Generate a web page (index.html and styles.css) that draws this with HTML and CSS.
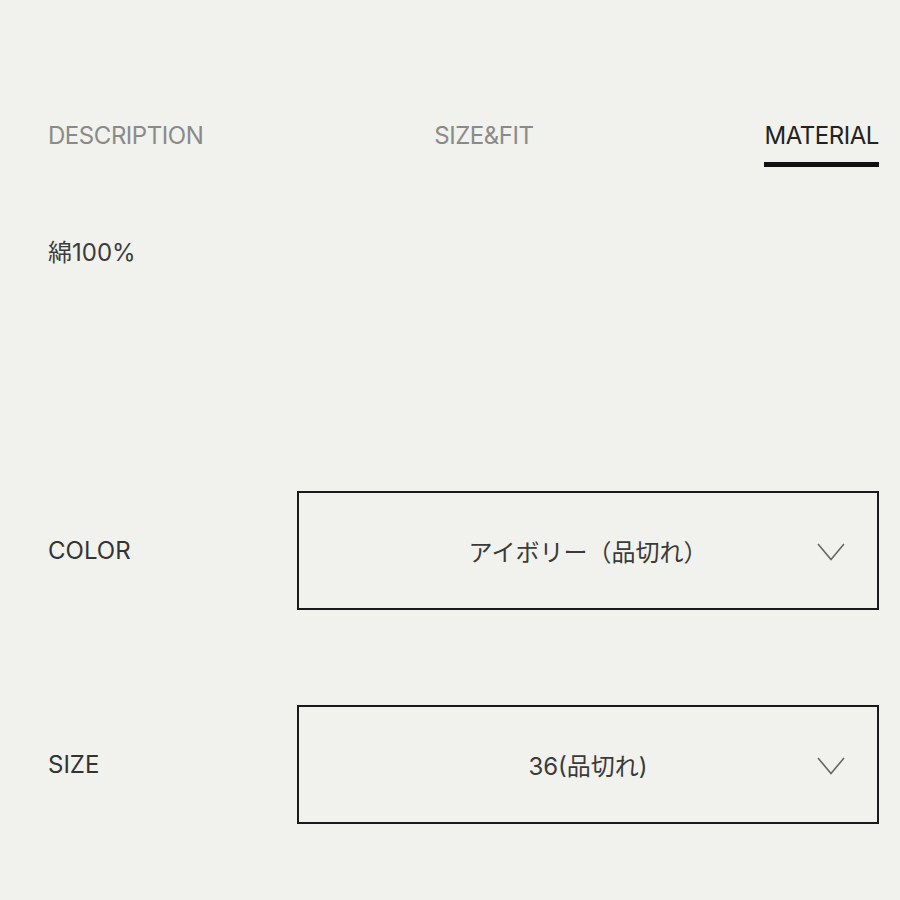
FILE: index.html
```html
<!DOCTYPE html>
<html lang="ja">
<head>
    <meta charset="UTF-8">
    <meta name="viewport" content="width=device-width, initial-scale=1.0">
    <title>Product detail</title>
    <link rel="stylesheet" href="styles.css">
</head>
<body>
    <div class="product">
        <div class="tabs">
            <button class="tab">DESCRIPTION</button>
            <button class="tab">SIZE&amp;FIT</button>
            <button class="tab active">MATERIAL</button>
        </div>

        <div class="tab-panel">
            <p>綿100%</p>
        </div>

        <div class="options">
            <div class="option-row">
                <span class="option-label">COLOR</span>
                <div class="select-box">
                    <span class="select-value">アイボリー（品切れ）</span>
                    <svg class="chevron" width="28" height="18" viewBox="0 0 28 18">
                        <polyline points="1,1 14,16.5 27,1" fill="none" stroke="#666" stroke-width="1.6"/>
                    </svg>
                </div>
            </div>

            <div class="option-row">
                <span class="option-label">SIZE</span>
                <div class="select-box">
                    <span class="select-value">36(品切れ)</span>
                    <svg class="chevron" width="28" height="18" viewBox="0 0 28 18">
                        <polyline points="1,1 14,16.5 27,1" fill="none" stroke="#666" stroke-width="1.6"/>
                    </svg>
                </div>
            </div>
        </div>
    </div>
</body>
</html>
```

FILE: styles.css
```css
body {
    margin: 0px;
    padding: 0px;
    background-color: #f1f1ed;
    font-family: Inter, "Noto Sans CJK JP", sans-serif;
    color: #333;
}

.product {
    padding: 121px 21px 0px 48px;
}

.tabs {
    display: flex;
    justify-content: space-between;
}

.tab {
    background: none;
    border: none;
    padding: 0px 0px 12px 0px;
    font-family: inherit;
    font-size: 24px;
    letter-spacing: -0.45px;
    color: #8a8a88;
    border-bottom: 5px solid transparent;
    cursor: pointer;
}

.tab.active {
    color: #222;
    border-bottom-color: #111;
}

.tab-panel p {
    margin: 70px 0px 0px 0px;
    font-size: 24px;
    line-height: 32px;
    color: #3c3c3c;
}

.options {
    display: flex;
    flex-direction: column;
    gap: 95px;
    margin-top: 222px;
}

.option-row {
    display: flex;
    align-items: center;
}

.option-label {
    width: 249px;
    font-size: 24px;
    color: #333;
}

.select-box {
    flex: 1;
    height: 115px;
    border: 2px solid #1a1a1a;
    display: flex;
    align-items: center;
    justify-content: center;
    position: relative;
}

.select-value {
    font-size: 24px;
    color: #3a3a3a;
}

.chevron {
    position: absolute;
    right: 32px;
    top: 50px;
}
```
